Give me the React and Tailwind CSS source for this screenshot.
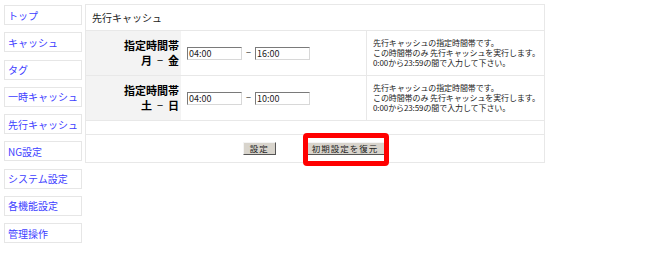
import React from "react";

const font = { fontFamily: '"Noto Sans CJK JP", "Noto Sans", sans-serif' };

const links = ["トップ", "キャッシュ", "タグ", "一時キャッシュ", "先行キャッシュ", "NG設定", "システム設定", "各機能設定", "管理操作"];

function TimeInput({ value }) {
  return (
    <div className="w-[55px] h-[13px] bg-white border border-t-[#7a7a7a] border-l-[#7a7a7a] border-r-[#d8d8d8] border-b-[#d8d8d8] text-[9px] leading-[11px] pl-[1px] text-[#222]">
      {value}
    </div>
  );
}

function Row({ a, b, from, to }) {
  return (
    <div className="flex h-[45px] border-t border-[#e8e8e8]">
      <div className="w-[95px] bg-[#f3f3f3] flex flex-col items-end justify-center pr-[2px] text-[11px] leading-[15px] font-bold text-black">
        <div>指定時間帯</div>
        <div className="flex gap-[5px]">
          <span>{a}</span>
          <span className="font-normal">−</span>
          <span>{b}</span>
        </div>
      </div>
      <div className="w-[186px] flex items-center pl-[6px] gap-[4px] border-r border-[#e8e8e8]">
        <TimeInput value={from} />
        <span className="text-[9px] text-[#333] w-[5px] text-center">−</span>
        <TimeInput value={to} />
      </div>
      <div className="flex-1 flex flex-col justify-center pl-[6px] text-[8px] leading-[10px] text-[#222] tracking-[-0.1px] whitespace-nowrap">
        <div>先行キャッシュの指定時間帯です。</div>
        <div>この時間帯のみ 先行キャッシュを実行します。</div>
        <div>0:00から23:59の間で入力して下さい。</div>
      </div>
    </div>
  );
}

function Btn({ children }) {
  return (
    <div className="h-[13px] bg-[#d8d4cc] border border-t-[#f4f4f4] border-l-[#f4f4f4] border-r-[#555] border-b-[#555] text-[8.5px] leading-[11px] px-[6px] text-[#222] tracking-[1px]">
      {children}
    </div>
  );
}

export default function App() {
  return (
    <div style={font} className="w-[650px] h-[280px] bg-white flex pl-[4px] pt-[4px]">
      <div className="w-[78px] flex flex-col gap-[7.25px] pt-[1px]">
        {links.map((l) => (
          <div key={l} className="h-[20px] border border-[#e6e6e6] flex items-center pl-[3px] text-[10px] text-[#4040ff]">
            {l}
          </div>
        ))}
      </div>
      <div className="ml-[3px] w-[460px] h-[159px] border border-[#e8e8e8] flex flex-col relative">
        <div className="h-[25px] flex items-center pl-[6px] text-[10px] text-[#222]">先行キャッシュ</div>
        <Row a="月" b="金" from="04:00" to="16:00" />
        <Row a="土" b="日" from="04:00" to="10:00" />
        <div className="h-[14px] border-t border-[#e8e8e8]" />
        <div className="flex-1 border-t border-[#e8e8e8] flex items-center justify-center gap-[29px] pr-[2px]">
          <Btn>設定</Btn>
          <Btn>初期設定を復元</Btn>
        </div>
        <div className="absolute left-[217px] top-[128px] w-[86px] h-[33px] border-[5px] border-[#ff0000] rounded-[4px]" />
      </div>
    </div>
  );
}
